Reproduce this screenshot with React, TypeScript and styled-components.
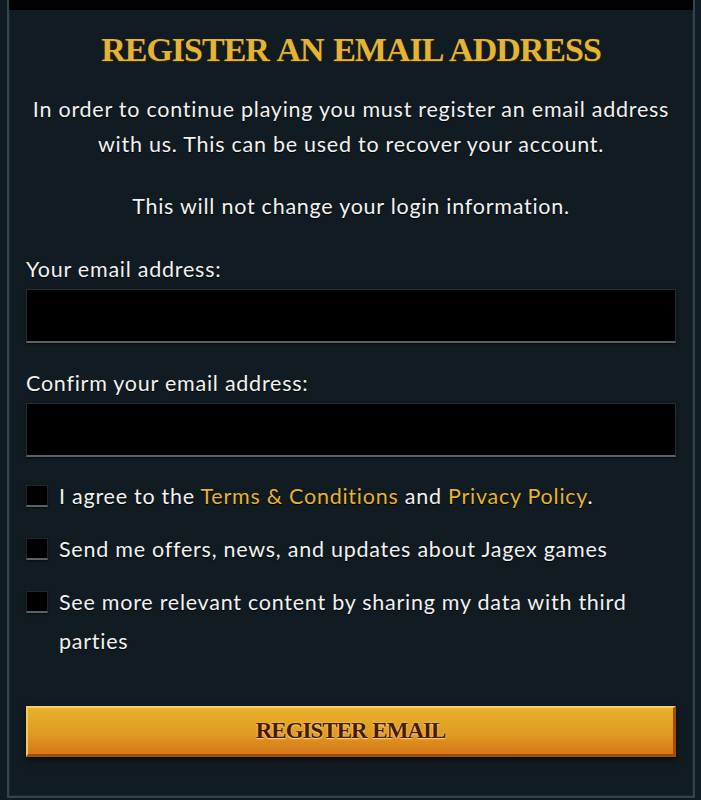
import React from "react";
import styled, { createGlobalStyle } from "styled-components";

const GlobalStyle = createGlobalStyle`
  html, body {
    margin: 0;
    padding: 0;
    background: #111c22;
  }
  #root {
    min-height: 800px;
  }
`;

const Page = styled.div`
  width: 701px;
  height: 800px;
  background: #111c22;
  padding-left: 7px;
  box-sizing: border-box;
  overflow: hidden;
`;

const Frame = styled.div`
  width: 688px;
  height: 798px;
  box-sizing: border-box;
  background: #111c22;
  border: 2px solid #32444f;
  border-top: none;
  box-shadow: inset 1px 0 0 #1b272e, inset -1px 0 0 #1b272e, inset 0 -1px 0 #1b272e;
  display: flex;
  flex-direction: column;
`;

const TopBar = styled.div`
  height: 10px;
  background: #000;
`;

const Body = styled.div`
  padding: 0 17px;
  display: flex;
  flex-direction: column;
  font-family: Lato, "Noto Sans", sans-serif;
  font-size: 21.5px;
  letter-spacing: 0.75px;
  color: #f2f2f2;
`;

const Title = styled.h1`
  margin: 22px 0 0;
  font-family: "Liberation Serif", serif;
  font-weight: bold;
  font-size: 34px;
  line-height: 36px;
  letter-spacing: -1px;
  word-spacing: 2px;
  text-align: center;
  color: #e4b434;
  text-shadow: 0 1px 1px #4a2a00;
`;

type GapProps = { $gap: number };

const Para = styled.p<GapProps>`
  margin: ${p => p.$gap}px 0 0;
  line-height: 35px;
  text-align: center;
  text-shadow: 0 1px 1px #000;
`;

const Label = styled.label<GapProps>`
  display: block;
  margin: ${p => p.$gap}px 0 5px;
  line-height: 30px;
  text-shadow: 0 1px 1px #000;
`;

const Input = styled.input`
  display: block;
  width: 100%;
  height: 54px;
  box-sizing: border-box;
  background: #000;
  border: 1px solid #262f35;
  border-bottom: 2px solid #5b6368;
  box-shadow: 0 1px 2px rgba(0, 0, 0, 0.6);
  outline: none;
  color: #fff;
  font-size: 18px;
  padding: 0 12px;
`;

const Checks = styled.div`
  margin-top: 20px;
  display: flex;
  flex-direction: column;
  gap: 14px;
`;

const CheckRow = styled.label`
  display: flex;
  align-items: flex-start;
  gap: 11px;
  line-height: 39px;
  text-shadow: 0 1px 1px #000;
`;

const Box = styled.span`
  flex: none;
  width: 22px;
  height: 22px;
  margin-top: 8px;
  box-sizing: border-box;
  background: #000;
  border: 1px solid #20282d;
  border-bottom: 2px solid #5b6368;
  box-shadow: 0 1px 2px rgba(0, 0, 0, 0.6);
`;

const Link = styled.a`
  color: #e6b432;
  text-decoration: none;
`;

const Button = styled.button`
  margin-top: 45px;
  width: 100%;
  height: 51px;
  box-sizing: border-box;
  background: linear-gradient(#e8b229, #e09b22 55%, #d5781a);
  border-style: solid;
  border-width: 2px 3px 3px 2px;
  border-color: #f4d06c #a34d08 #a34d08 #f1c95e;
  box-shadow: 0 3px 6px rgba(0, 0, 0, 0.55);
  font-family: "Liberation Serif", serif;
  font-weight: bold;
  font-size: 23px;
  letter-spacing: -1px;
  word-spacing: 1px;
  color: #4a1a04;
  text-shadow: 0 0 2px #f8d884, 0 1px 1px #f8d884;
  cursor: pointer;
`;

export default function App() {
  return (
    <Page>
      <GlobalStyle />
      <Frame>
        <TopBar />
        <Body>
          <Title>REGISTER AN EMAIL ADDRESS</Title>
          <Para $gap={24}>
            In order to continue playing you must register an email address
            with us. This can be used to recover your account.
          </Para>
          <Para $gap={27}>This will not change your login information.</Para>
          <Label $gap={30}>Your email address:</Label>
          <Input type="email" />
          <Label $gap={25}>Confirm your email address:</Label>
          <Input type="email" />
          <Checks>
            <CheckRow>
              <Box />
              <span>
                I agree to the <Link>Terms &amp; Conditions</Link> and{" "}
                <Link>Privacy Policy</Link>.
              </span>
            </CheckRow>
            <CheckRow>
              <Box />
              <span>Send me offers, news, and updates about Jagex games</span>
            </CheckRow>
            <CheckRow>
              <Box />
              <span>
                See more relevant content by sharing my data with third parties
              </span>
            </CheckRow>
          </Checks>
          <Button>REGISTER EMAIL</Button>
        </Body>
      </Frame>
    </Page>
  );
}
